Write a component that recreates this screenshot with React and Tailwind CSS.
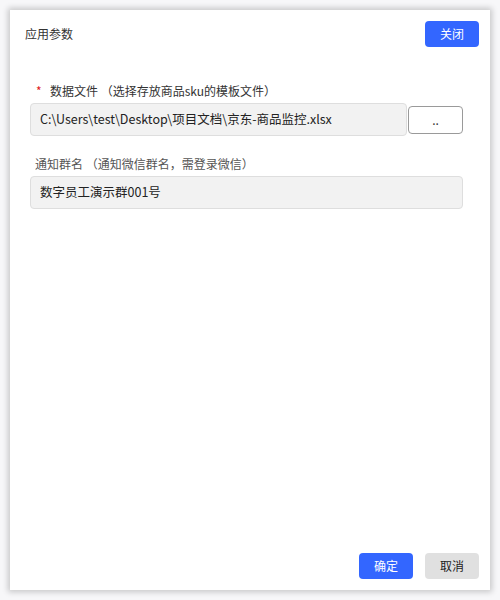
export default function App() {
  const font = { fontFamily: '"Microsoft YaHei", "Noto Sans CJK SC", sans-serif' };
  return (
    <div className="w-[500px] h-[600px] bg-[#f7f7f9] p-[10px]" style={font}>
      <div className="w-[480px] h-[580px] bg-white shadow-[0_0_6px_2px_rgba(0,0,0,0.2)] flex flex-col">
        <div className="flex items-center justify-between pl-[15px] pr-[11px] pt-[11px]">
          <span className="text-[12px] text-[#333]">应用参数</span>
          <button className="w-[54px] h-[26px] rounded-[4px] bg-[#3366ff] text-white text-[12px]">关闭</button>
        </div>
        <div className="pl-[20px] pr-[27px] mt-[35px] flex-1">
          <div className="flex items-center h-[18px] text-[12px] text-[#333]">
            <span className="text-[#e02020] ml-[6px] w-[14px]">*</span>
            <span>数据文件 （选择存放商品sku的模板文件）</span>
          </div>
          <div className="flex items-center mt-[3px]">
            <div className="w-[377px] h-[33px] bg-[#f2f2f2] border border-[#dedede] rounded-[4px] flex items-center pl-[9px] text-[12.5px] text-[#222]">
              C:\Users\test\Desktop\项目文档\京东-商品监控.xlsx
            </div>
            <button className="ml-[1px] w-[55px] h-[28px] bg-white border border-[#9a9a9a] rounded-[4px] text-[12px] text-[#333] leading-none">..</button>
          </div>
          <div className="mt-[19px] h-[18px] flex items-center text-[12px] text-[#555] pl-[5px]">
            通知群名 （通知微信群名，需登录微信）
          </div>
          <div className="mt-[3px] w-[433px] h-[33px] bg-[#f2f2f2] border border-[#dedede] rounded-[4px] flex items-center pl-[9px] text-[12.5px] text-[#222]">
            数字员工演示群001号
          </div>
        </div>
        <div className="flex justify-end gap-[12px] pr-[11px] pb-[11px]">
          <button className="w-[54px] h-[26px] rounded-[4px] bg-[#3366ff] text-white text-[12px]">确定</button>
          <button className="w-[54px] h-[26px] rounded-[4px] bg-[#e0e0e0] text-[#222] text-[12px]">取消</button>
        </div>
      </div>
    </div>
  );
}
